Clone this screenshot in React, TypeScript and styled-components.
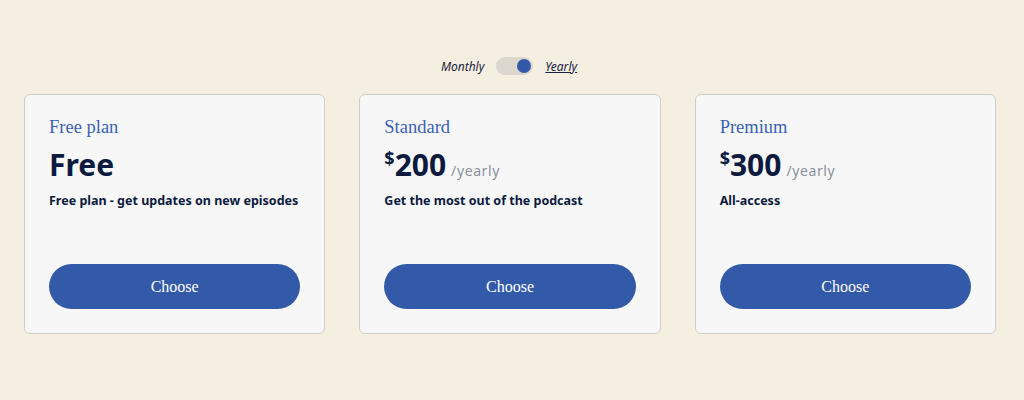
import React, { useState } from "react";
import styled, { createGlobalStyle } from "styled-components";

const GlobalStyle = createGlobalStyle`
  html, body {
    margin: 0;
    padding: 0;
    background: #f5efe2;
    font-family: "Noto Sans", "Open Sans", sans-serif;
  }
`;

const Page = styled.div`
  padding: 55px 28px 0 24px;
  display: flex;
  flex-direction: column;
  align-items: center;
`;

const ToggleRow = styled.div`
  display: flex;
  align-items: center;
  gap: 12px;
  height: 22px;
  margin-bottom: 17px;
  margin-left: -2px;
`;

const ToggleLabel = styled.span<{ $active?: boolean }>`
  font-size: 12px;
  font-style: italic;
  color: #1a2340;
  text-decoration: ${(p) => (p.$active ? "underline" : "none")};
  cursor: pointer;
`;

const Switch = styled.button<{ $on: boolean }>`
  position: relative;
  width: 37px;
  height: 18px;
  border: none;
  border-radius: 9px;
  background: #dcd8d0;
  padding: 0;
  cursor: pointer;

  &::after {
    content: "";
    position: absolute;
    top: 2px;
    left: ${(p) => (p.$on ? "21px" : "2px")};
    width: 14px;
    height: 14px;
    border-radius: 50%;
    background: #335aa8;
  }
`;

const Cards = styled.div`
  width: 100%;
  display: grid;
  grid-template-columns: repeat(3, 1fr);
  gap: 34px;
`;

const Card = styled.div`
  background: #f7f7f7;
  border: 1px solid #cfcdc8;
  border-radius: 6px;
  height: 240px;
  box-sizing: border-box;
  padding: 22px 24px 24px;
  display: flex;
  flex-direction: column;
`;

const PlanName = styled.h3`
  margin: 0;
  font-family: "Liberation Serif", "DejaVu Serif", serif;
  font-weight: 400;
  font-size: 18.5px;
  color: #3a62b3;
  line-height: 21px;
`;

const PriceRow = styled.div`
  display: flex;
  align-items: baseline;
  margin-top: 6px;
  height: 36px;
  color: #0c1a40;
`;

const Currency = styled.span`
  font-size: 18px;
  font-weight: 700;
  align-self: flex-start;
  margin-top: 2px;
`;

const Amount = styled.span`
  font-size: 30px;
  font-weight: 700;
`;

const Period = styled.span`
  font-size: 14px;
  color: #8b909d;
  margin-left: 5px;
  letter-spacing: 0.6px;
`;

const Description = styled.p`
  margin: 12px 0 0;
  font-size: 12.5px;
  font-weight: 700;
  color: #0c1a40;
`;

const ChooseButton = styled.button`
  margin-top: auto;
  width: 100%;
  height: 45px;
  border: none;
  border-radius: 23px;
  background: #335aa8;
  color: #ffffff;
  font-family: "Liberation Serif", "DejaVu Serif", serif;
  font-size: 16px;
  cursor: pointer;
`;

type Plan = {
  name: string;
  price: string;
  free?: boolean;
  description: string;
};

const plans: Plan[] = [
  { name: "Free plan", price: "Free", free: true, description: "Free plan - get updates on new episodes" },
  { name: "Standard", price: "200", description: "Get the most out of the podcast" },
  { name: "Premium", price: "300", description: "All-access" },
];

export default function App() {
  const [yearly, setYearly] = useState(true);

  return (
    <>
      <GlobalStyle />
      <Page>
        <ToggleRow>
          <ToggleLabel $active={!yearly} onClick={() => setYearly(false)}>
            Monthly
          </ToggleLabel>
          <Switch $on={yearly} onClick={() => setYearly(!yearly)} aria-label="toggle billing" />
          <ToggleLabel $active={yearly} onClick={() => setYearly(true)}>
            Yearly
          </ToggleLabel>
        </ToggleRow>
        <Cards>
          {plans.map((plan) => (
            <Card key={plan.name}>
              <PlanName>{plan.name}</PlanName>
              <PriceRow>
                {plan.free ? (
                  <Amount>{plan.price}</Amount>
                ) : (
                  <>
                    <Currency>$</Currency>
                    <Amount>{plan.price}</Amount>
                    <Period>/{yearly ? "yearly" : "monthly"}</Period>
                  </>
                )}
              </PriceRow>
              <Description>{plan.description}</Description>
              <ChooseButton>Choose</ChooseButton>
            </Card>
          ))}
        </Cards>
      </Page>
    </>
  );
}
